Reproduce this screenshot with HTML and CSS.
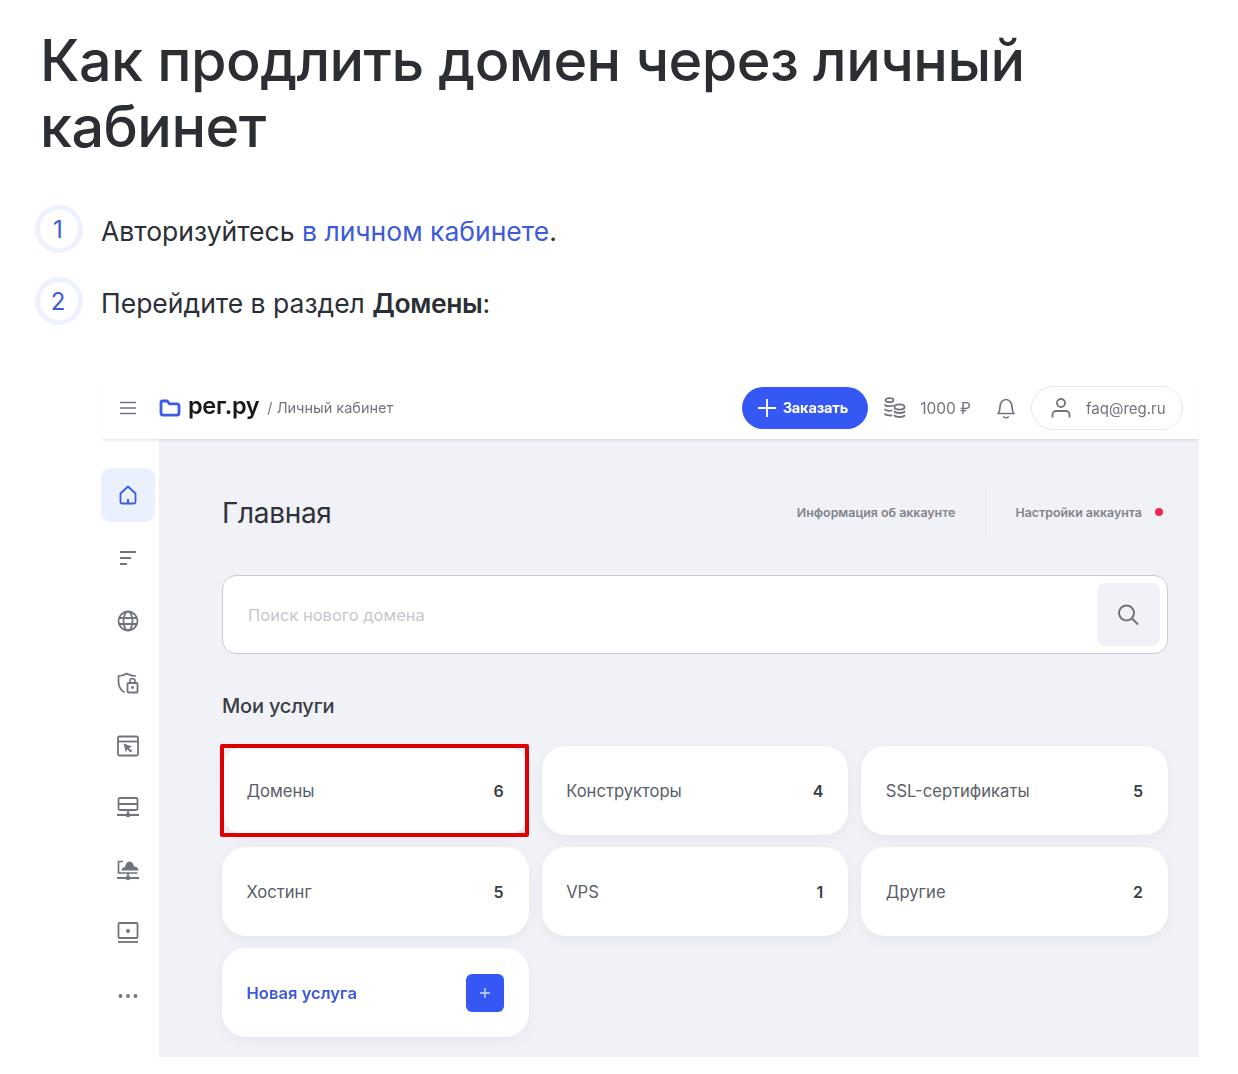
FILE: index.html
```html
<!DOCTYPE html>
<html lang="ru">
<head>
<meta charset="utf-8">
<title>Как продлить домен через личный кабинет</title>
<link rel="stylesheet" href="styles.css">
</head>
<body>
<main class="article">
  <h1 class="title">Как продлить домен через личный кабинет</h1>
  <ol class="steps">
    <li class="step"><span class="step-num">1</span><p class="step-text">Авторизуйтесь <a class="link">в личном кабинете</a>.</p></li>
    <li class="step"><span class="step-num">2</span><p class="step-text">Перейдите в раздел <b>Домены</b>:</p></li>
  </ol>
  <figure class="shot">
    <header class="topbar">
      <svg class="ico burger" viewBox="0 0 18 14" width="18" height="14"><path d="M1 1.500h16M1 7h16M1 12.500h16" fill="none" stroke="#70747f" stroke-width="1.700"/></svg>
      <svg class="logo-ico" viewBox="0 0 22 18" width="22" height="18"><path d="M2 4.500V14a2.200 2.200 0 0 0 2.200 2.200h13.600A2.200 2.200 0 0 0 20 14V7a2.200 2.200 0 0 0-2.200-2.200H10.500L8.300 2H3.500A1.500 1.500 0 0 0 2 3.500z" fill="none" stroke="#3b5bf0" stroke-width="2.800" stroke-linejoin="round"/></svg>
      <span class="logo-text">рег.ру</span>
      <span class="crumb">/ Личный кабинет</span>
      <span class="spacer"></span>
      <button class="order"><svg viewBox="0 0 20 20" width="20" height="20"><path d="M10 1v18M1 10h18" stroke="#fff" stroke-width="1.800" fill="none"/></svg>Заказать</button>
      <svg class="coins" viewBox="0 0 24 22" width="24" height="22"><g fill="none" stroke="#70747f" stroke-width="1.800" stroke-linecap="round"><ellipse cx="6.500" cy="3.200" rx="4" ry="2"/><path d="M2 8c1 1.500 6 1.500 8 .5M2 12.500c1 1.500 5 1.500 6.500 1M2 17c1 1.500 5 1.500 6.500 1.500"/><ellipse cx="16.500" cy="10" rx="5" ry="2.600"/><path d="M11.500 14.500c1 2 9 2 10 0M11.500 18.500c1 2 9 2 10 0"/></g></svg>
      <span class="balance">1000 ₽</span>
      <svg class="bell" viewBox="0 0 22 24" width="22" height="24"><path d="M3 17.500h16c-1.500-1.500-2-3-2-6.500 0-4-2.500-7.500-6-7.500S5 7 5 11c0 3.500-.5 5-2 6.500zM8.800 21c1 1 3.400 1 4.400 0" fill="none" stroke="#70747f" stroke-width="1.700" stroke-linecap="round" stroke-linejoin="round"/></svg>
      <div class="user">
        <svg viewBox="0 0 22 22" width="22" height="22"><circle cx="11" cy="6" r="4" fill="none" stroke="#70747f" stroke-width="1.800"/><path d="M2.500 20.500v-3a3.500 3.500 0 0 1 3.500-3.500h10a3.500 3.500 0 0 1 3.500 3.500v3" fill="none" stroke="#70747f" stroke-width="1.800"/></svg>
        <span>faq@reg.ru</span>
      </div>
    </header>
    <div class="app">
      <nav class="side">
        <div class="side-item active"><svg viewBox="0 0 18 20" width="18" height="20"><path d="M1.500 8.500 9 1.500l7.500 7V17a1.500 1.500 0 0 1-1.500 1.500H3A1.500 1.500 0 0 1 1.500 17z" fill="none" stroke="#3b5bf0" stroke-width="1.800" stroke-linejoin="round"/><path d="M9 14v4" stroke="#3b5bf0" stroke-width="2"/></svg></div>
        <div class="side-item"><svg viewBox="0 0 18 16" width="18" height="16"><path d="M1 2h16M1 8h11M1 14h7" stroke="#70747f" stroke-width="1.800" fill="none"/></svg></div>
        <div class="side-item"><svg viewBox="0 0 22 22" width="22" height="22"><g fill="none" stroke="#70747f" stroke-width="1.800"><circle cx="11" cy="11" r="9.500"/><ellipse cx="11" cy="11" rx="4.500" ry="9.500"/><path d="M2 8h18M2 14h18"/></g></svg></div>
        <div class="side-item"><svg viewBox="0 0 22 22" width="22" height="22"><path d="M7 20C3.500 18 1.500 14 1.500 9V4c3 0 6-1 8-2.500 2 1.500 5 2 9 2.500" fill="none" stroke="#70747f" stroke-width="1.700" stroke-linecap="round"/><rect x="10.500" y="11" width="10" height="9.500" rx="1" fill="none" stroke="#70747f" stroke-width="1.800"/><path d="M13 11V9a2.500 2.500 0 0 1 5 0v2" fill="none" stroke="#70747f" stroke-width="1.600"/><circle cx="15.500" cy="15.500" r="1.400" fill="#70747f"/></svg></div>
        <div class="side-item"><svg viewBox="0 0 22 22" width="22" height="22"><rect x="1" y="1.500" width="20" height="19" rx="1.500" fill="none" stroke="#70747f" stroke-width="1.800"/><path d="M1 6.500h20" stroke="#70747f" stroke-width="1.800"/><path d="M6.500 8.500l8.500 3-3.200 1.400 3.400 3.200-1.600 1.500-3.400-3.300-1.300 3.300z" fill="#70747f"/></svg></div>
        <div class="side-item"><svg viewBox="0 0 22 22" width="22" height="22"><rect x="1.500" y="1" width="19" height="12" rx="1.500" fill="none" stroke="#70747f" stroke-width="1.800"/><path d="M1.500 7h19M11 13v7M0 18h22" stroke="#70747f" stroke-width="1.800" fill="none"/><circle cx="11" cy="18" r="2.200" fill="#70747f"/></svg></div>
        <div class="side-item"><svg viewBox="0 0 22 22" width="22" height="22"><path d="M6 1.500H1.500v11.500h19" fill="none" stroke="#70747f" stroke-width="1.700"/><path d="M4.500 10.500c0-2.200 1.700-3.500 3.500-3.500C8.500 4 10 1.500 12.500 1.500S16.500 4 17 6.500c2.500 0 4.500 1.500 4.500 4z" fill="#70747f"/><path d="M11 13v7M0 18h22" stroke="#70747f" stroke-width="1.800" fill="none"/><circle cx="11" cy="18" r="2.200" fill="#70747f"/></svg></div>
        <div class="side-item"><svg viewBox="0 0 22 22" width="22" height="22"><rect x="1.500" y="1" width="19" height="15" rx="1" fill="none" stroke="#70747f" stroke-width="1.800"/><circle cx="11" cy="9" r="2" fill="#70747f"/><path d="M1 20h20" stroke="#70747f" stroke-width="1.800"/></svg></div>
        <div class="side-item"><svg viewBox="0 0 20 4" width="20" height="4"><circle cx="2.500" cy="2" r="1.900" fill="#70747f"/><circle cx="10" cy="2" r="1.900" fill="#70747f"/><circle cx="17.500" cy="2" r="1.900" fill="#70747f"/></svg></div>
      </nav>
      <section class="content">
        <div class="head">
          <h2 class="page-title">Главная</h2>
          <div class="head-links">
            <span class="head-link">Информация об аккаунте</span>
            <span class="head-sep"></span>
            <span class="head-link">Настройки аккаунта</span>
            <span class="dot"></span>
          </div>
        </div>
        <div class="search">
          <span class="placeholder">Поиск нового домена</span>
          <span class="search-btn"><svg viewBox="0 0 24 24" width="24" height="24"><circle cx="9.500" cy="10" r="7.500" fill="none" stroke="#70747f" stroke-width="2"/><path d="M15 15.500l6 6" stroke="#70747f" stroke-width="2"/></svg></span>
        </div>
        <h3 class="sub">Мои услуги</h3>
        <div class="cards">
          <div class="card marked"><span class="card-name">Домены</span><span class="card-num">6</span></div>
          <div class="card"><span class="card-name">Конструкторы</span><span class="card-num">4</span></div>
          <div class="card"><span class="card-name">SSL-сертификаты</span><span class="card-num">5</span></div>
          <div class="card"><span class="card-name">Хостинг</span><span class="card-num">5</span></div>
          <div class="card"><span class="card-name">VPS</span><span class="card-num">1</span></div>
          <div class="card"><span class="card-name">Другие</span><span class="card-num">2</span></div>
          <div class="card"><span class="card-new">Новая услуга</span><span class="plus"><svg viewBox="0 0 12 12" width="12" height="12"><path d="M6 1v10M1 6h10" stroke="#cfd8ff" stroke-width="1.400"/></svg></span></div>
        </div>
      </section>
    </div>
  </figure>
</main>
</body>
</html>
```
FILE: styles.css
```css
* { box-sizing: border-box; }
html, body { margin: 0; padding: 0; background: #fff; }
body { font-family: Inter, "Noto Sans", sans-serif; color: #2b2f36; }
.article { width: 1238px; height: 1074px; padding: 27px 39px 0 40px; overflow: hidden; }
.title { margin: 0; font-size: 57.500px; line-height: 66px; font-weight: 500; letter-spacing: -.55px; color: #2b2e33; width: 1100px; }
.steps { list-style: none; margin: 46px 0 0 -5px; padding: 0; display: flex; flex-direction: column; gap: 24px; }
.step { display: flex; align-items: center; gap: 18px; height: 48px; }
.step-num { width: 48px; height: 48px; flex: none; border: 5px solid #eef2fc; border-radius: 50%; display: flex; align-items: center; justify-content: center; color: #3b5bd9; font-size: 24px; line-height: 1; padding: 2px 2px 0 0; }
.step-text { margin: 0; font-size: 26.500px; line-height: 32px; font-weight: 400; padding-top: 4px; }
.step-text b { font-weight: 600; letter-spacing: -.4px; }
.link { color: #3b5bd9; }
.shot { margin: 50px 0 0 61px; width: 1098px; height: 682px; display: flex; flex-direction: column; filter: blur(.35px); }
.topbar { height: 64px; flex: none; display: flex; align-items: center; padding: 2px 16px 0 18px; background: #fff; box-shadow: 0 3px 3px -2px rgba(40, 50, 80, .16); position: relative; z-index: 1; }
.burger { margin-right: 22px; }
.logo-ico { margin-right: 7px; }
.logo-text { font-size: 23.500px; font-weight: 600; color: #16181d; letter-spacing: -.3px; line-height: 1; padding-bottom: 5px; }
.crumb { margin-left: 8px; font-size: 14.500px; color: #70747f; padding-bottom: 2px; }
.spacer { flex: 1; }
.order { height: 42px; width: 126px; border: 0; border-radius: 21px; background: #3558f5; color: #fff; display: flex; align-items: center; gap: 5.500px; padding: 0 0 0 15px; font: 700 14.600px Inter, sans-serif; letter-spacing: -.2px; margin-right: 15px; }
.coins { margin-right: 13px; }
.balance { font-size: 15.500px; color: #70747f; margin-right: 24px; white-space: nowrap; }
.bell { margin-right: 14px; }
.user { height: 44px; width: 152px; border: 1px solid #e6e8ee; border-radius: 22px; display: flex; align-items: center; gap: 14px; padding-left: 18px; font-size: 15px; color: #70747f; }
.app { flex: 1; display: flex; min-height: 0; }
.side { width: 58px; flex: none; padding-top: 25px; display: flex; flex-direction: column; background: #fff; }
.side-item { height: 62.500px; width: 54px; flex: none; display: flex; align-items: center; justify-content: center; }
.side-item.active { height: 54px; margin: 4px 0 5px; border-radius: 9px; background: #eaf0fd; }
.content { flex: 1; background: #f0f2f7; padding: 0 31px 0 63px; }
.head { height: 136px; display: flex; align-items: center; justify-content: space-between; padding-top: 10px; }
.page-title { margin: 0; font-size: 28px; line-height: 36px; font-weight: 400; color: #2f3238; letter-spacing: -.3px; padding-top: 1px; }
.head-links { display: flex; align-items: center; font-size: 12.400px; font-weight: 600; color: #80848e; padding-right: 5px; }
.head-sep { width: 1px; height: 48px; background: #e7e9ef; margin: 0 29px 0 30px; }
.dot { width: 8px; height: 8px; border-radius: 50%; background: #f0274d; margin-left: 13px; }
.search { height: 79px; border: 1px solid #c8cbd3; border-radius: 14px; background: #fff; display: flex; align-items: center; justify-content: space-between; padding: 0 7px 0 25px; }
.placeholder { font-size: 16.500px; color: #c4c7ce; }
.search-btn { width: 63px; height: 63px; border-radius: 8px; background: #f0f2f7; display: flex; align-items: center; justify-content: center; }
.sub { margin: 38px 0 26px; font-size: 20px; line-height: 28px; font-weight: 500; color: #3a3d44; letter-spacing: -.2px; }
.cards { display: grid; grid-template-columns: repeat(3, 1fr); grid-auto-rows: 89px; gap: 12px 13px; }
.card { background: #fff; border-radius: 24px; display: flex; align-items: center; justify-content: space-between; padding: 0 25px 0 24.500px; box-shadow: 0 4px 12px rgba(50, 60, 100, .06); position: relative; }
.marked::after { content: ""; position: absolute; inset: -2px 0 -2px -2px; border: 4px solid #e00000; border-radius: 2px; }
.card-name { font-size: 16.600px; color: #5a5e68; }
.card-num { font-size: 16px; font-weight: 600; color: #3a3e46; }
.card-new { font-size: 16.600px; font-weight: 600; color: #3e59d9; }
.plus { width: 38px; height: 38px; border-radius: 6px; background: #3558f5; display: flex; align-items: center; justify-content: center; }
```
